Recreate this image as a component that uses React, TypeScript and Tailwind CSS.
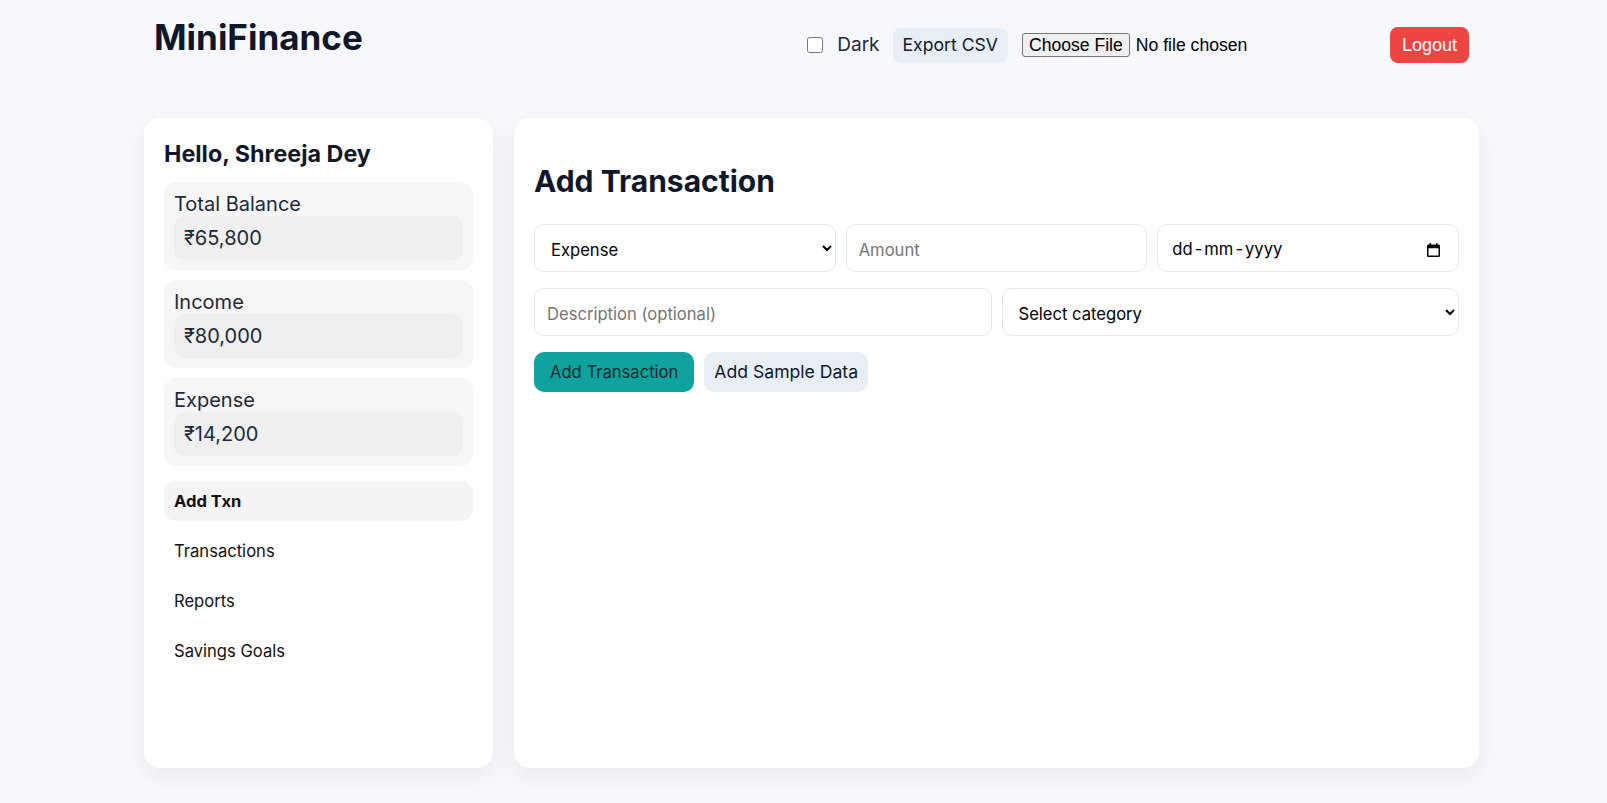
import React from "react";

const stats = [
  { label: "Total Balance", value: "₹65,800" },
  { label: "Income", value: "₹80,000" },
  { label: "Expense", value: "₹14,200" },
];

const nav = ["Add Txn", "Transactions", "Reports", "Savings Goals"];

const field =
  "h-12 w-full rounded-[10px] border border-[#e3e8ef] bg-white px-3 pt-[3px] text-[16.6px] text-black outline-none placeholder:text-[#757575]";

function CalendarIcon() {
  return (
    <svg width="15" height="16" viewBox="0 0 15 16" fill="none">
      <rect x="1.75" y="3.25" width="11.5" height="11" rx="0.75" stroke="#000" strokeWidth="1.5" />
      <rect x="1.75" y="3.25" width="11.5" height="3" fill="#000" />
      <rect x="3.5" y="1" width="1.5" height="3" fill="#000" />
      <rect x="10" y="1" width="1.5" height="3" fill="#000" />
    </svg>
  );
}

export default function App() {
  return (
    <div className="min-h-[803px] bg-[#f7f8fb] font-['Inter',sans-serif] text-[#0f172a]">
      <div className="ml-[144px] w-[1335px]">
        {/* header */}
        <header className="flex items-start px-2.5">
          <h1 className="mt-[17px] text-[35px] leading-10 font-bold text-[#0f172a]">
            MiniFinance
          </h1>
          <div className="mt-[27px] ml-auto flex items-center">
            <label className="flex items-center text-[19px] text-[#1e293b]">
              <input type="checkbox" className="h-[16px] w-[16px]" />
              <span className="ml-3.5">Dark</span>
            </label>
            <button className="ml-[13px] h-[35px] rounded-lg bg-[#e7eef6] px-2.5 text-[17.6px] text-[#0f172a]">
              Export CSV
            </button>
            <input
              type="file"
              className="ml-3.5 w-[368px] font-['Liberation_Sans',Arial,sans-serif] text-[17.6px] leading-[22px] text-black file:mr-1.5 file:rounded-[3px] file:border file:border-[#767676] file:bg-[#efefef] file:px-1.5 file:py-0 file:text-black"
            />
            <button className="h-9 rounded-lg bg-[#ef4444] px-3 font-['Liberation_Sans',Arial,sans-serif] text-[18px] text-white">
              Logout
            </button>
          </div>
        </header>

        <div className="mt-[55px] grid h-[650px] grid-cols-[349px_1fr] gap-[21px]">
          {/* sidebar */}
          <aside className="rounded-2xl bg-white p-5 shadow-[0_8px_24px_rgba(15,23,42,0.06)]">
            <h2 className="mb-[14px] pt-[2px] text-[23.3px] leading-7 font-bold text-[#0f172a]">
              Hello, Shreeja Dey
            </h2>
            <div className="flex flex-col gap-2.5">
              {stats.map((s) => (
                <div key={s.label} className="rounded-xl bg-[#f6f6f6] p-2.5">
                  <div className="text-xl leading-6 text-[#1e293b]">{s.label}</div>
                  <div className="rounded-[10px] bg-[#efefef] px-2.5 pt-[11px] pb-2.5 text-xl leading-[23px] text-[#1e293b]">
                    {s.value}
                  </div>
                </div>
              ))}
            </div>
            <nav className="mt-[15px] flex flex-col gap-2.5">
              {nav.map((n, i) => (
                <div
                  key={n}
                  className={
                    i === 0
                      ? "flex h-10 items-center rounded-xl bg-[#f4f4f5] px-2.5 text-[16.6px] font-bold text-[#111]"
                      : "flex h-10 items-center px-2.5 text-[16.6px] text-[#111]"
                  }
                >
                  {n}
                </div>
              ))}
            </nav>
          </aside>

          {/* main */}
          <main className="rounded-2xl bg-white p-5 shadow-[0_8px_24px_rgba(15,23,42,0.06)]">
            <h2 className="my-[25px] text-3xl leading-9 font-bold text-[#0f172a]">
              Add Transaction
            </h2>
            <div className="flex flex-col gap-4">
              <div className="grid grid-cols-3 gap-2.5">
                <select className={field} defaultValue="expense">
                  <option value="expense">Expense</option>
                  <option value="income">Income</option>
                </select>
                <input className={field} placeholder="Amount" />
                <div className={field + " flex items-center justify-between pr-[17px]"}>
                  <span className="pl-[2px]">
                    dd<span className="mx-[2px]">-</span>mm<span className="mx-[2px]">-</span>yyyy
                  </span>
                  <CalendarIcon />
                </div>
              </div>
              <div className="grid grid-cols-2 gap-2.5">
                <input className={field} placeholder="Description (optional)" />
                <select className={field} defaultValue="">
                  <option value="">Select category</option>
                  <option value="food">Food</option>
                </select>
              </div>
              <div className="flex gap-2.5">
                <button className="h-10 rounded-[10px] bg-[#0fa3a0] px-4 text-[16.6px] text-[#0b2a2a]">
                  Add Transaction
                </button>
                <button className="h-10 rounded-[10px] bg-[#e7eef6] px-2.5 text-[17.6px] text-[#0f172a]">
                  Add Sample Data
                </button>
              </div>
            </div>
          </main>
        </div>
      </div>
    </div>
  );
}
